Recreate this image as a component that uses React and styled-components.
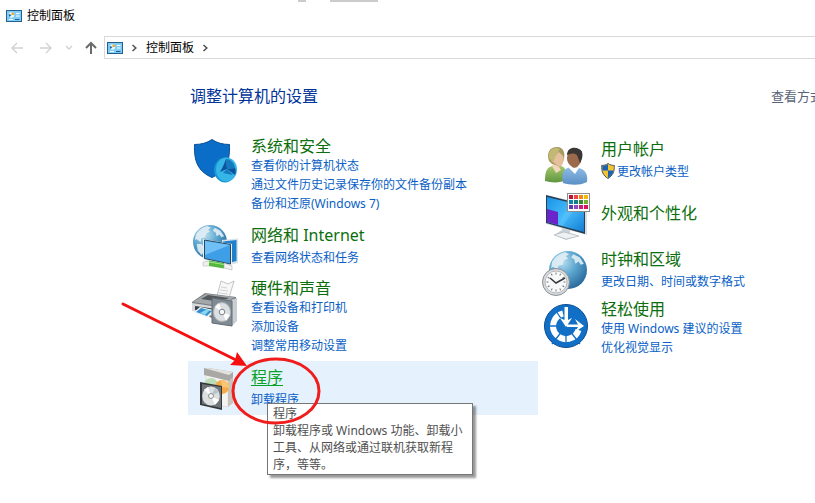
import React from 'react';
import styled, { createGlobalStyle } from 'styled-components';

const GlobalStyle = createGlobalStyle`
  * {
    box-sizing: border-box;
  }

  body {
    margin: 0;
    background: #fff;
    font-family: 'Noto Sans', 'Noto Sans CJK SC', sans-serif;
    font-size: 12px;
    color: #000;
  }
`;

const Page = styled.div`
  min-height: 100vh;
  overflow: hidden;
`;

const TopEdge = styled.div`
  display: flex;
  gap: 24px;
  height: 2px;
  padding-left: 298px;
`;

const EdgeMark = styled.span`
  width: ${props => props.$width}px;
  background: #cbcbcb;
`;

const TitleBar = styled.header`
  display: flex;
  align-items: center;
  gap: 5px;
  height: 27px;
  padding-left: 6px;
`;

const WindowTitle = styled.h1`
  margin: 0;
  font-size: 12px;
  font-weight: 400;
  line-height: 18px;
`;

const NavBar = styled.nav`
  display: flex;
  align-items: center;
  padding-top: 7px;
`;

const NavButtons = styled.div`
  display: flex;
  align-items: center;
  justify-content: space-between;
  width: 104px;
  padding: 0 6px 0 10px;
`;

const NavButton = styled.button`
  display: flex;
  padding: 0;
  border: 0;
  background: none;
  color: ${props => (props.disabled ? '#d2d2d2' : '#6a6a6a')};
`;

const AddressBar = styled.div`
  display: flex;
  flex: 1;
  align-items: center;
  gap: 8px;
  height: 23px;
  padding-left: 2px;
  border: 1px solid #d9d9d9;
  border-right: 0;
  color: #555;
`;

const Crumb = styled.button`
  padding: 0;
  border: 0;
  background: none;
  color: #000;
  font: inherit;
  line-height: 18px;
`;

const Content = styled.main`
  min-width: 700px;
  margin-left: 188px;
  padding-top: 25px;
`;

const ContentHead = styled.div`
  display: flex;
  align-items: center;
  justify-content: space-between;
  padding: 0 65px 0 2px;
  margin-bottom: 25px;
  min-width: 700px;
`;

const PageHeading = styled.h2`
  margin: 0;
  color: #003399;
  font-size: 16px;
  font-weight: 400;
  line-height: 24px;
`;

const ViewBy = styled.span`
  color: #5a6478;
  font-size: 13px;
  line-height: 20px;
`;

const Columns = styled.div`
  display: grid;
  grid-template-columns: repeat(2, minmax(350px, 1fr));
  width: 700px;
`;

const Column = styled.div`
  display: flex;
  flex-direction: column;
  gap: ${props => props.$gap}px;
  padding-top: ${props => props.$top}px;
`;

const Item = styled.section`
  position: relative;
  display: flex;
  gap: 12px;
  min-height: 54px;
  padding: 1px 3px 2px;
  background: ${props => (props.$active ? '#e5f1fd' : 'transparent')};
`;

const IconBox = styled.div`
  flex: none;
  width: 48px;
  height: 48px;
  margin-top: 3px;

  svg {
    display: block;
    overflow: visible;
  }
`;

const ItemText = styled.div`
  display: flex;
  flex-direction: column;
  align-items: flex-start;
  justify-content: center;
`;

const ItemTitle = styled.a`
  margin-bottom: ${props => (props.$roomy ? 3 : 0)}px;
  color: ${props => (props.$active ? '#08a226' : '#0c6e0c')};
  font-size: 16px;
  line-height: 20px;
  text-decoration: ${props => (props.$active ? 'underline' : 'none')};
  text-underline-offset: 2px;
  text-decoration-thickness: 1px;
`;

const ItemLink = styled.a`
  display: flex;
  align-items: center;
  gap: 2px;
  color: #0a5fc6;
  line-height: 19px;
  text-decoration: none;
  white-space: nowrap;
`;

const Tooltip = styled.div`
  position: absolute;
  left: 79px;
  top: 42px;
  width: 206px;
  padding: 1px 5px;
  border: 1px solid #767676;
  background: #fff;
  box-shadow: 3px 3px 2px rgba(0, 0, 0, 0.4);
  color: #505050;
  line-height: 17px;
`;

const TipText = styled.p`
  margin: 0;
`;

const Marker = styled.svg`
  position: absolute;
  left: -70px;
  top: -64px;
  pointer-events: none;
`;

const PanelIcon = () => (
  <svg width="16" height="12" viewBox="0 0 16 12" aria-hidden="true">
    <rect width="16" height="12" fill="#235f91" />
    <rect x="1" y="1" width="14" height="10" fill="#7fcdf6" />
    <circle cx="5.5" cy="5" r="2.7" fill="#e9f7ff" />
    <path d="M5.5 5V2.3A2.7 2.7 0 0 1 8.2 5Z" fill="#f0a92d" />
    <path d="M5.5 5 3.6 6.9A2.7 2.7 0 0 1 3 4Z" fill="#1d6ba3" />
    <path d="M10 3.5h3.5M10 6h3.5M3 9.5h4" stroke="#fff" />
    <path d="M9 9.5h4.5" stroke="#1b5d94" />
  </svg>
);

const Arrow = ({ d, label, disabled, width = 14 }) => (
  <NavButton type="button" aria-label={label} disabled={disabled}>
    <svg width={width} height="14" viewBox={`0 0 ${width} 14`} fill="none" stroke="currentColor" strokeWidth={disabled ? 1.4 : 2}>
      <path d={d} />
    </svg>
  </NavButton>
);

const Chevron = () => (
  <svg width="7" height="8" viewBox="0 0 7 8" fill="none" stroke="currentColor" strokeWidth="1.6" aria-hidden="true">
    <path d="M1.5 1 4.8 4 1.5 7" />
  </svg>
);

const SmallShield = () => (
  <svg width="14" height="16" viewBox="0 0 14 16" aria-hidden="true">
    <path d="M7 .5C5 2 3 2.4.7 2.4.4 8.5 2 12.5 7 15.5 12 12.5 13.6 8.5 13.3 2.4 11 2.4 9 2 7 .5Z" fill="#f3c330" stroke="#4d5a68" />
    <path d="M7 1.2C5.2 2.5 3.500 2.9 1.3 2.9L1.5 7.5H7ZM7 7.500h5.500C12 11 10 13.200 7 14.9Z" fill="#1c62b4" />
  </svg>
);

const Svg = ({ children }) => (
  <svg width="48" height="48" viewBox="0 0 48 48" aria-hidden="true">{children}</svg>
);

const SecurityIcon = () => (
  <Svg>
    <path d="M21 .5C16 4 10 5.500 3.500 5.500 3 21 6 32 21 38.500 36 32 39 21 38.500 5.500 32 5.500 26 4 21 .5Z" fill="#0a6dc8" stroke="#0b4f94" />
    <ellipse cx="34" cy="31" rx="11" ry="12.500" fill="#1795cf" />
    <ellipse cx="35.500" cy="30.500" rx="10.500" ry="12" fill="#36b5e8" />
    <path d="M36 30 35 20C40 20 43 24 44 29Z" fill="#1479bd" />
    <path d="M36 30 29 33C32 28 33 25 35 20Z" fill="#0b559d" />
    <path d="M36 30 44 36C45 33 45 31 44 29Z" fill="#0b559d" />
    <path d="M36 30 32 34 42 36Z" fill="#1479bd" />
  </Svg>
);

const Globe = ({ cx, cy, r, id }) => (
  <g>
    <defs>
      <radialGradient id={id} cx="35%" cy="28%" r="75%">
        <stop offset="0" stopColor="#b9dff0" />
        <stop offset="0.5" stopColor="#5ba6cf" />
        <stop offset="1" stopColor="#2a6b9d" />
      </radialGradient>
    </defs>
    <circle cx={cx} cy={cy} r={r} fill={`url(#${id})`} />
    <g transform={`translate(${cx - r} ${cy - r}) scale(${r / 18})`} fill="#e2eff5" opacity="0.9">
      <path d="M6 6 10 3 15 1 19 3 16 5 18 7 14 9 13 13 9 14 8 18 4 15 2 16 3 10Z" />
      <path d="M23 3 29 6 33 12 30 13 28 10 25 12 24 8 21 6Z" />
      <path d="M4 20 9 20 13 24 11 29 9 32 5 27Z" />
    </g>
  </g>
);

const NetworkIcon = () => (
  <Svg>
    <Globe cx={19} cy={19} r={17} id="netGlobe" />
    <path d="M31 17 47 15.500V40L31 44Z" fill="#d9e2e8" />
    <path d="M32 18.500 45.500 17V38L32 41.500Z" fill="#1f7fcb" />
    <path d="M12 16 41 21V43L12 37Z" fill="#e8eef2" />
    <path d="M13.500 17 39.500 21.500V41L13.500 35.500Z" fill="#3e9ee6" stroke="#28485f" />
    <path d="M14 18 39 22 14 32Z" fill="#6fc0f6" />
    <path d="m12 39 7-1v5l-7 0Z" fill="#eef0ef" stroke="#a8b1ad" strokeWidth=".5" />
    <path d="m18 37.500 15 2.500v5.500L18 43Z" fill="#54b83e" />
    <path d="m18 39 15 2.500" stroke="#a6e68d" />
    <path d="m33 40 8 3v4l-8-2Z" fill="#f2f2f2" stroke="#a5a5a5" strokeWidth=".5" />
  </Svg>
);

const HardwareIcon = () => (
  <Svg>
    <path d="M26 15 30 0 37 3 43 0 38 17Z" fill="#f7f7f7" stroke="#a9adb0" strokeWidth=".7" />
    <path d="M30 6 36 7M29 9 37 10M28 12 37 13" stroke="#cfd3d6" />
    <path d="M1 21 14 12 45 16V29L21 37 1 29Z" fill="#7a7f83" />
    <path d="M2 21 15 13 44 16 28 25Z" fill="#a4a8ab" />
    <path d="M10 18 17 14 38 17 30 21Z" fill="#54595d" />
    <path d="M1 22 27 26V36L1 30Z" fill="#d6d9dc" />
    <path d="M4 25 25 28V33L4 29Z" fill="#3a4045" />
    <path d="M2 32 9 26 23 29 17 37Z" fill="#f5f8fa" />
    <path d="M5 31 10 27 21 30 16 35Z" fill="#338ed0" />
    <path d="m9 32 7-4 3 1-5 5Z" fill="#86d4ed" />
    <path d="M22 18 40 19 46 17V40L41 45 22 42Z" fill="#c9ced2" />
    <path d="M21 17 41 20V45L21 42Z" fill="#818b94" stroke="#626b73" />
    <ellipse cx="31" cy="31" rx="8.500" ry="9.500" fill="#dce0e2" stroke="#adb4b8" />
    <path d="M31 31 24 26 28 22ZM31 31 39 34 35 40Z" fill="#fff" />
    <circle cx="31" cy="31" r="2.800" fill="#f8f8f8" stroke="#7c858c" />
  </Svg>
);

const ProgramsIcon = () => (
  <Svg>
    <path d="m15 10 22 4v28l-22-3Z" fill="#f4f3f0" stroke="#d1cfca" strokeWidth=".5" />
    <path d="m37 14 5-4v28l-5 4Z" fill="#c9c3be" />
    <path d="m13 3 4 0 25 4v5l-4 4-25-6Z" fill="#aaa8a5" />
    <path d="m13 3 25 7 4-3-25-4Z" fill="#e4e2df" />
    <circle cx="20" cy="20" r="7" fill="#bddcb8" />
    <circle cx="31" cy="22" r="7" fill="#f5aa48" />
    <path d="M31 22 30 15A7 7 0 0 1 38 23Z" fill="#f9c473" />
    <path d="m9 17 22 4v24L9 40Z" fill="#34383c" />
    <path d="m11 19 19 3v21l-19-4Z" fill="#6e7477" />
    <ellipse cx="20" cy="31" rx="8.800" ry="9.500" fill="#dce0e0" />
    <path d="m20 31-7-6 4-3ZM20 31l8 4-4 5Z" fill="#fff" />
    <path d="m20 31 4-8 4 4Z" fill="#b9c5cd" />
    <circle cx="20" cy="31" r="2.500" fill="#f7f7f7" stroke="#888e91" />
  </Svg>
);

const UsersIcon = () => (
  <Svg>
    <defs>
      <linearGradient id="userGreen" x1="0" y1="0" x2="0" y2="1">
        <stop offset="0" stopColor="#a5c86b" />
        <stop offset="1" stopColor="#5f9640" />
      </linearGradient>
      <linearGradient id="userBlue" x1="0" y1="0" x2="0" y2="1">
        <stop offset="0" stopColor="#90bce5" />
        <stop offset="1" stopColor="#5a90c6" />
      </linearGradient>
    </defs>
    <path d="M4 44C4 34 6 30 12 29L20 29C24 30 26 34 26 43 19 46 11 46 4 44Z" fill="url(#userGreen)" />
    <path d="M8 24C5 16 9 10 16 10 23 10 25 17 22 25L19 30 11 27Z" fill="#a39a5c" />
    <path d="M12 20 18 15 22 19C24 25 21 29 18 30L12 25Z" fill="#e6bf9c" />
    <path d="M12 27 18 30 20 33 15 36 11 29Z" fill="#f4d5bb" />
    <path d="M8 21C7 12 13 9 19 12L14 20 12 26Z" fill="#c3b975" />
    <path d="M22 46C20 37 22 32 29 30L38 31C45 33 47 38 46 45 38 49 29 48 22 46Z" fill="url(#userBlue)" />
    <path d="m27 30 4-3 7 4-4 6Z" fill="#fff" />
    <path d="M27 17C28 11 37 10 41 15L40 25C37 30 34 33 30 29 26 26 25 21 27 17Z" fill="#9a6a4b" />
    <path d="M26 18C26 11 33 9 38 12 43 14 42 21 39 26L36 18C32 15 29 17 26 18Z" fill="#393634" />
  </Svg>
);

const swatches = [
  ['#bc1434', '#f04444', '#f28a10', '#f2b90d'],
  ['#0b86af', '#167f86', '#368b31', '#76ae32'],
  ['#5a3db0', '#8c4ec0', '#ce1d79', '#d6135c'],
];

const AppearanceIcon = () => (
  <Svg>
    <defs>
      <linearGradient id="screenBlue" x1="0" y1="0" x2="1" y2="1">
        <stop offset="0" stopColor="#1893e6" />
        <stop offset="0.5" stopColor="#46bbfa" />
        <stop offset="1" stopColor="#137bd3" />
      </linearGradient>
    </defs>
    <path d="m13 43 8-5V32l8 2v7l9 3-13 4Z" fill="#cbd2d8" />
    <path d="m13 43 10-3 15 4-13 3Z" fill="#eef1f3" stroke="#9da6ae" strokeWidth=".5" />
    <path d="m5 3 41 9v31L5 32Z" fill="#d8dee3" />
    <path d="m5 3 39 10v29L5 31Z" fill="#263f53" />
    <path d="m6 5 37 9v26L6 30Z" fill="url(#screenBlue)" />
    <path d="m6 17 11 3v13L6 30Z" fill="#6a24c9" />
    <path d="m17 33 13-22 6 2-14 21Z" fill="#74d2ff" opacity=".3" />
    <rect x="26.500" y="1.500" width="22" height="18" fill="#fff" stroke="#8d8d8d" />
    {swatches.map((row, y) => row.map((fill, x) => (
      <rect key={fill} x={28 + x * 5} y={3 + y * 5} width="4" height="4" fill={fill} />
    )))}
  </Svg>
);

const ClockIcon = () => (
  <Svg>
    <Globe cx={27} cy={23} r={19} id="clockGlobe" />
    <circle cx="15" cy="35" r="13.500" fill="#d9dcde" stroke="#898e92" />
    <circle cx="15" cy="35" r="11" fill="#f8f9f9" stroke="#b2b7ba" />
    {[...Array(12)].map((_, i) => (
      <path key={i} d="M15 25.500v2" stroke="#71767a" transform={`rotate(${i * 30} 15 35)`} />
    ))}
    <path d="m9 31 6 5 9-5" fill="none" stroke="#343a3e" strokeWidth="1.500" />
  </Svg>
);

const EaseIcon = () => (
  <Svg>
    <circle cx="25" cy="24" r="21.500" fill="#1170c5" stroke="#094c91" />
    <path d="M22 11.500A13 13 0 1 0 37.500 28" fill="none" stroke="#fff" strokeWidth="6" />
    <path d="M25 24 13 6M25 24H5M25 24 11 42M25 24V45M25 24 39 42" stroke="#1170c5" strokeWidth="1.300" />
    <path d="M23.500 5h3.500v13l4-2-6 9-6-9 4.500 2ZM26 22.500h11l-3-5.500 9 7-9 6 3-5H26Z" fill="#fff" />
  </Svg>
);

const leftItems = [
  { title: '系统和安全', icon: SecurityIcon, links: ['查看你的计算机状态', '通过文件历史记录保存你的文件备份副本', '备份和还原(Windows 7)'] },
  { title: '网络和 Internet', icon: NetworkIcon, links: ['查看网络状态和任务'] },
  { title: '硬件和声音', icon: HardwareIcon, links: ['查看设备和打印机', '添加设备', '调整常用移动设置'] },
  { title: '程序', icon: ProgramsIcon, links: ['卸载程序'], active: true },
];

const rightItems = [
  { title: '用户帐户', icon: UsersIcon, links: ['更改帐户类型'], shield: true },
  { title: '外观和个性化', icon: AppearanceIcon, links: [] },
  { title: '时钟和区域', icon: ClockIcon, links: ['更改日期、时间或数字格式'] },
  { title: '轻松使用', icon: EaseIcon, links: ['使用 Windows 建议的设置', '优化视觉显示'] },
];

const Category = ({ title, icon: Icon, links, active, shield }) => (
  <Item $active={active}>
    <IconBox><Icon /></IconBox>
    <ItemText>
      <ItemTitle href="#" $active={active} $roomy={links.length < 2}>{title}</ItemTitle>
      {links.map(link => (
        <ItemLink href="#" key={link}>
          {shield && <SmallShield />}
          {link}
        </ItemLink>
      ))}
    </ItemText>
    {active && (
      <>
        <Tooltip role="tooltip">
          <TipText>程序</TipText>
          <TipText>卸载程序或 Windows 功能、卸载小工具、从网络或通过联机获取新程序，等等。</TipText>
        </Tooltip>
        <Marker width="210" height="132" viewBox="0 0 210 132" aria-hidden="true">
          <path d="M5 7 118 63" stroke="#f5100f" strokeWidth="3" strokeLinecap="round" />
          <path d="m129 69-17-1 5-5 2-8Z" fill="#f5100f" />
          <ellipse cx="158" cy="94" rx="43" ry="32" fill="none" stroke="#ef1d1b" strokeWidth="3" />
        </Marker>
      </>
    )}
  </Item>
);

const App = () => (
  <>
    <GlobalStyle />
    <Page>
      <TopEdge>
        <EdgeMark $width={8} />
        <EdgeMark $width={48} />
      </TopEdge>
      <TitleBar>
        <PanelIcon />
        <WindowTitle>控制面板</WindowTitle>
      </TitleBar>
      <NavBar>
        <NavButtons>
          <Arrow label="后退" disabled width={18} d="M13 7H2M7 2 2 7l5 5" />
          <Arrow label="前进" disabled d="M1 7h11M7 2l5 5-5 5" />
          <Arrow label="最近" disabled width={8} d="m1 5 3 3 3-3" />
          <Arrow label="向上" d="M7 13V2M2 7l5-5 5 5" />
        </NavButtons>
        <AddressBar>
          <PanelIcon />
          <Chevron />
          <Crumb type="button">控制面板</Crumb>
          <Chevron />
        </AddressBar>
      </NavBar>
      <Content>
        <ContentHead>
          <PageHeading>调整计算机的设置</PageHeading>
          <ViewBy>查看方式</ViewBy>
        </ContentHead>
        <Columns>
          <Column $gap={4} $top={2}>
            {leftItems.map(item => <Category key={item.title} {...item} />)}
          </Column>
          <Column $gap={1} $top={0}>
            {rightItems.map(item => <Category key={item.title} {...item} />)}
          </Column>
        </Columns>
      </Content>
    </Page>
  </>
);

export default App;
